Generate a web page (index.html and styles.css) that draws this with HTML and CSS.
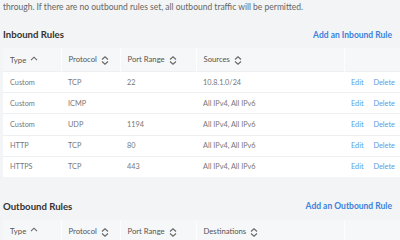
FILE: index.html
```html
<!DOCTYPE html>
<html lang="en">
<head>
    <meta charset="UTF-8">
    <title>Firewall Rules</title>
    <link rel="stylesheet" href="styles.css">
</head>
<body>
    <p class="intro">through. If there are no outbound rules set, all outbound traffic will be permitted.</p>

    <div class="section-head">
        <h2>Inbound Rules</h2>
        <a class="add-link" href="#">Add an Inbound Rule</a>
    </div>
    <table class="rules-table">
        <colgroup>
            <col class="c-type"><col class="c-proto"><col class="c-port"><col class="c-src"><col>
        </colgroup>
        <thead>
            <tr>
                <th>Type <span class="sort-up"><svg width="8" height="5" viewBox="0 0 8 5"><path d="M1 4.2 4 1.2 7 4.2" fill="none" stroke="#666" stroke-width="1.1"/></svg></span></th>
                <th>Protocol <span class="sort"><svg width="8" height="9" viewBox="0 0 8 9"><path d="M1 3.5 4 .8 7 3.5M1 5.5 4 8.2 7 5.5" fill="none" stroke="#666" stroke-width="1.1"/></svg></span></th>
                <th>Port Range <span class="sort"><svg width="8" height="9" viewBox="0 0 8 9"><path d="M1 3.5 4 .8 7 3.5M1 5.5 4 8.2 7 5.5" fill="none" stroke="#666" stroke-width="1.1"/></svg></span></th>
                <th>Sources <span class="sort"><svg width="8" height="9" viewBox="0 0 8 9"><path d="M1 3.5 4 .8 7 3.5M1 5.5 4 8.2 7 5.5" fill="none" stroke="#666" stroke-width="1.1"/></svg></span></th>
                <th></th>
            </tr>
        </thead>
        <tbody>
            <tr><td>Custom</td><td>TCP</td><td>22</td><td>10.8.1.0/24</td><td class="actions"><a href="#">Edit</a><a href="#">Delete</a></td></tr>
            <tr><td>Custom</td><td>ICMP</td><td></td><td>All IPv4, All IPv6</td><td class="actions"><a href="#">Edit</a><a href="#">Delete</a></td></tr>
            <tr><td>Custom</td><td>UDP</td><td>1194</td><td>All IPv4, All IPv6</td><td class="actions"><a href="#">Edit</a><a href="#">Delete</a></td></tr>
            <tr><td>HTTP</td><td>TCP</td><td>80</td><td>All IPv4, All IPv6</td><td class="actions"><a href="#">Edit</a><a href="#">Delete</a></td></tr>
            <tr><td>HTTPS</td><td>TCP</td><td>443</td><td>All IPv4, All IPv6</td><td class="actions"><a href="#">Edit</a><a href="#">Delete</a></td></tr>
        </tbody>
    </table>

    <div class="section-head outbound">
        <h2>Outbound Rules</h2>
        <a class="add-link" href="#">Add an Outbound Rule</a>
    </div>
    <table class="rules-table">
        <colgroup>
            <col class="c-type"><col class="c-proto"><col class="c-port"><col class="c-src"><col>
        </colgroup>
        <thead>
            <tr>
                <th>Type <span class="sort-up"><svg width="8" height="5" viewBox="0 0 8 5"><path d="M1 4.2 4 1.2 7 4.2" fill="none" stroke="#666" stroke-width="1.1"/></svg></span></th>
                <th>Protocol <span class="sort"><svg width="8" height="9" viewBox="0 0 8 9"><path d="M1 3.5 4 .8 7 3.5M1 5.5 4 8.2 7 5.5" fill="none" stroke="#666" stroke-width="1.1"/></svg></span></th>
                <th>Port Range <span class="sort"><svg width="8" height="9" viewBox="0 0 8 9"><path d="M1 3.5 4 .8 7 3.5M1 5.5 4 8.2 7 5.5" fill="none" stroke="#666" stroke-width="1.1"/></svg></span></th>
                <th>Destinations <span class="sort"><svg width="8" height="9" viewBox="0 0 8 9"><path d="M1 3.5 4 .8 7 3.5M1 5.5 4 8.2 7 5.5" fill="none" stroke="#666" stroke-width="1.1"/></svg></span></th>
                <th></th>
            </tr>
        </thead>
    </table>
</body>
</html>
```

FILE: styles.css
```css
html, body { margin: 0; padding: 0; }
body { font-family: Lato, "Open Sans", sans-serif; background: #f3f4f5; color: #444; padding: 0 0 0 3px; overflow: hidden; }
.intro { margin: 0; padding-top: 2px; font-size: 8.5px; line-height: 11px; color: #666; }
.section-head { display: flex; justify-content: space-between; align-items: center; margin-top: 14px; height: 15px; padding-right: 8px; }
.section-head.outbound { margin-top: 22px; }
.section-head h2 { margin: 0; font-size: 9.6px; font-weight: bold; color: #333; }
.add-link { font-size: 8.5px; font-weight: bold; color: #3b82dc; text-decoration: none; }
.rules-table { width: 397px; border-collapse: collapse; table-layout: fixed; margin-top: 6px; background: #fff; }
.c-type { width: 58px; }
.c-proto { width: 59px; }
.c-port { width: 76px; }
.c-src { width: 148px; }
.rules-table th { background: #f6f7f8; height: 23px; padding: 0 0 0 7px; text-align: left; font-size: 7.7px; font-weight: normal; color: #555; border-left: 1px solid #fdfdfd; white-space: nowrap; }
.rules-table th:first-child { border-left: none; }
.rules-table td { height: 20.2px; padding: 0 0 0 7px; font-size: 7.3px; color: #777; border-top: 1px solid #eeeff0; white-space: nowrap; }
.sort, .sort-up { display: inline-block; margin-left: 2px; vertical-align: middle; }
.sort-up { vertical-align: 2px; }
.sort svg, .sort-up svg { display: block; }
.actions a { color: #5b9be3; text-decoration: none; margin-right: 10px; }
```
